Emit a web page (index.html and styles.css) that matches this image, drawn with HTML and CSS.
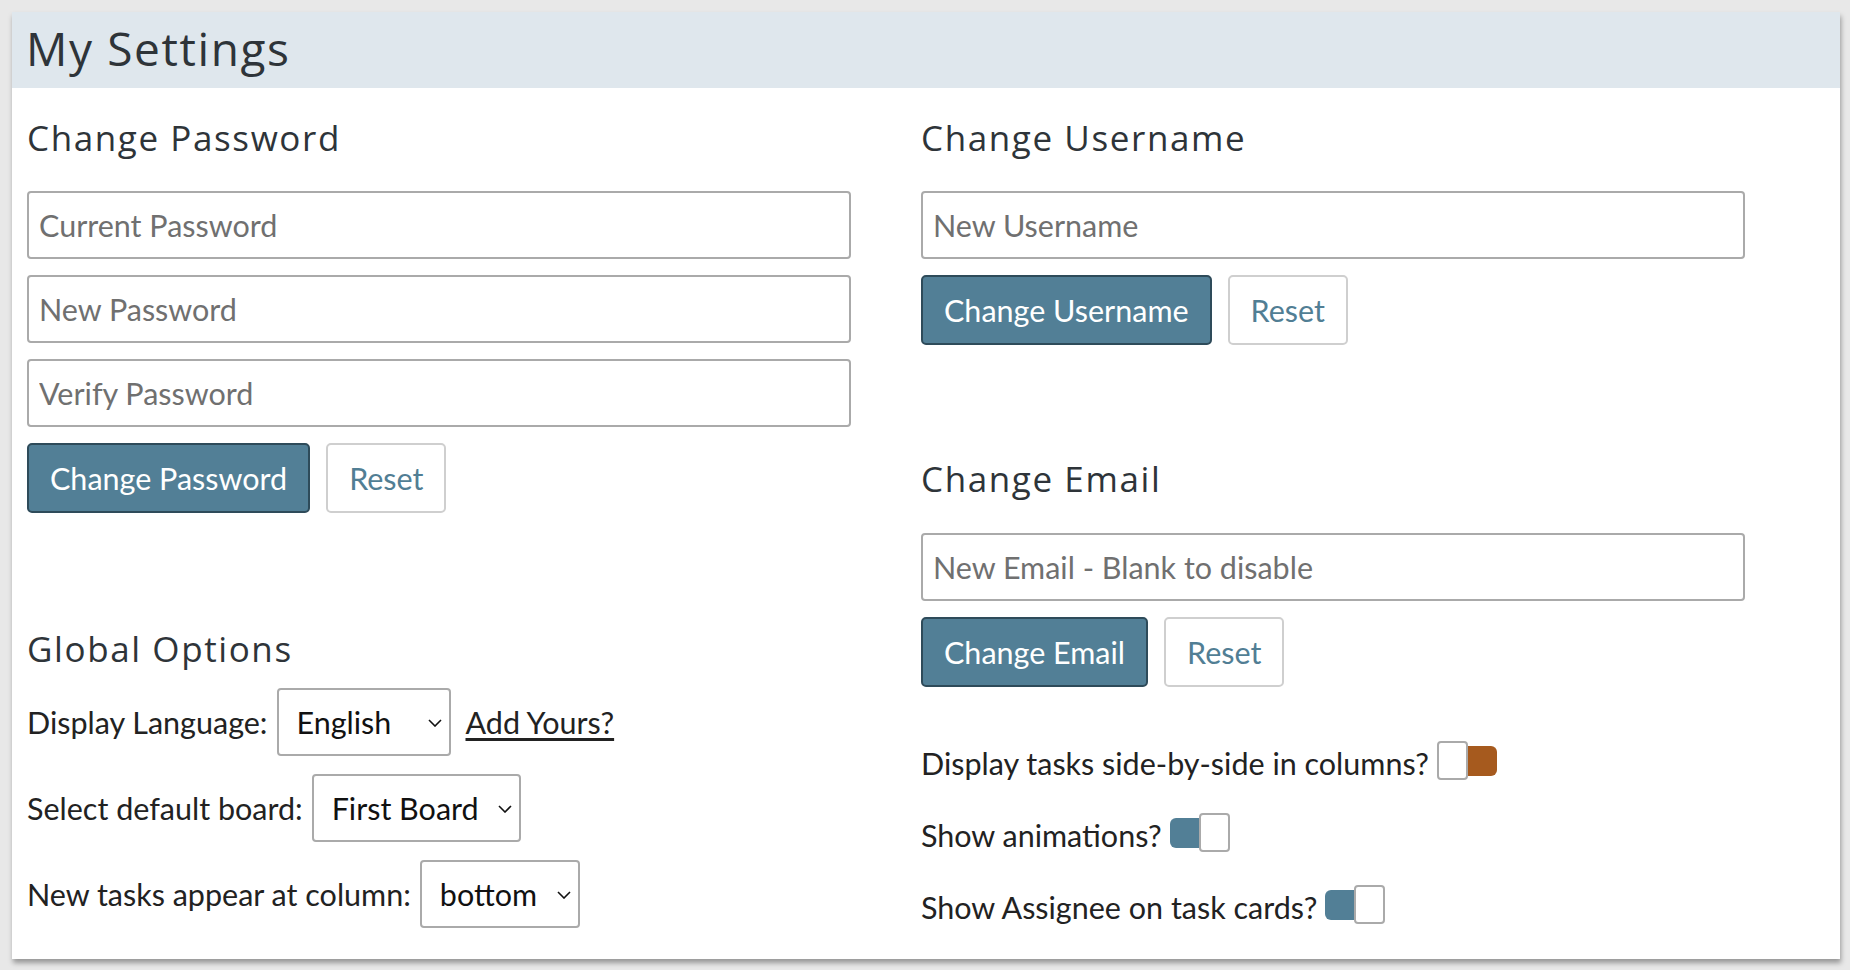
FILE: index.html
```html
<!DOCTYPE html>
<html lang="en">
<head>
<meta charset="utf-8">
<title>My Settings</title>
<link rel="stylesheet" href="styles.css">
</head>
<body>
<div class="card">
  <div class="card-header">My Settings</div>
  <div class="card-body">
    <div class="col">
      <section class="group">
        <h2 class="heading">Change Password</h2>
        <input class="field" type="password" placeholder="Current Password">
        <input class="field" type="password" placeholder="New Password">
        <input class="field" type="password" placeholder="Verify Password">
        <div class="btn-row">
          <button class="btn btn-primary">Change Password</button>
          <button class="btn btn-reset">Reset</button>
        </div>
      </section>
      <section class="group group-options">
        <h2 class="heading">Global Options</h2>
        <div class="opt-row">
          <label class="opt-label">Display Language:</label>
          <span class="sel-wrap">
            <select class="sel sel-lang"><option>English</option></select>
            <svg class="chev" viewBox="0 0 14 8" width="14" height="8"><path d="M1 1l6 6 6-6" fill="none" stroke="#111" stroke-width="1.6"/></svg>
          </span>
          <a class="add-link" href="#">Add Yours?</a>
        </div>
        <div class="opt-row">
          <label class="opt-label">Select default board:</label>
          <span class="sel-wrap">
            <select class="sel"><option>First Board</option></select>
            <svg class="chev" viewBox="0 0 14 8" width="14" height="8"><path d="M1 1l6 6 6-6" fill="none" stroke="#111" stroke-width="1.6"/></svg>
          </span>
        </div>
        <div class="opt-row">
          <label class="opt-label">New tasks appear at column:</label>
          <span class="sel-wrap">
            <select class="sel"><option>bottom</option></select>
            <svg class="chev" viewBox="0 0 14 8" width="14" height="8"><path d="M1 1l6 6 6-6" fill="none" stroke="#111" stroke-width="1.6"/></svg>
          </span>
        </div>
      </section>
    </div>
    <div class="col">
      <section class="group">
        <h2 class="heading">Change Username</h2>
        <input class="field" type="text" placeholder="New Username">
        <div class="btn-row">
          <button class="btn btn-primary">Change Username</button>
          <button class="btn btn-reset">Reset</button>
        </div>
      </section>
      <section class="group group-email">
        <h2 class="heading">Change Email</h2>
        <input class="field" type="text" placeholder="New Email - Blank to disable">
        <div class="btn-row">
          <button class="btn btn-primary">Change Email</button>
          <button class="btn btn-reset">Reset</button>
        </div>
      </section>
      <section class="toggles">
        <div class="toggle-row">
          <span class="toggle-label">Display tasks side-by-side in columns?</span>
          <span class="toggle toggle-off"><span class="knob"></span><span class="track"></span></span>
        </div>
        <div class="toggle-row">
          <span class="toggle-label">Show animations?</span>
          <span class="toggle toggle-on"><span class="track"></span><span class="knob"></span></span>
        </div>
        <div class="toggle-row">
          <span class="toggle-label">Show Assignee on task cards?</span>
          <span class="toggle toggle-on"><span class="track"></span><span class="knob"></span></span>
        </div>
      </section>
    </div>
  </div>
</div>
</body>
</html>
```
FILE: styles.css
```css
* { box-sizing: border-box; }

html, body {
  margin: 0;
  padding: 0;
}

body {
  background: #e8e8e8;
  font-family: "Lato", "Liberation Sans", sans-serif;
  color: #222;
  width: 1850px;
  height: 970px;
  overflow: hidden;
}

.card {
  margin: 12px 0 0 12px;
  width: 1828px;
  background: #fff;
  box-shadow: 1px 4px 5px rgba(0, 0, 0, 0.35);
}

.card-header {
  height: 76px;
  background: #dfe7ed;
  padding: 0 0 4px 14px;
  font-family: "Open Sans", "Lato", sans-serif;
  font-size: 46px;
  letter-spacing: 1.6px;
  line-height: 72px;
  color: #2e3439;
}

.card-body {
  display: grid;
  grid-template-columns: 894px 1fr;
  padding: 0 15px 31px;
}

.col {
  display: flex;
  flex-direction: column;
}

.heading {
  margin: 29px 0 32px;
  font-family: "Open Sans", "Lato", sans-serif;
  font-size: 35px;
  letter-spacing: 1.6px;
  font-weight: 400;
  line-height: 1.2;
  color: #2e3439;
}

.field {
  display: block;
  width: 824px;
  height: 68px;
  margin: 0 0 16px;
  padding: 0 10px;
  border: 2px solid #aaa;
  border-radius: 4px;
  font-family: inherit;
  font-size: 30.5px;
  color: #222;
  background: #fff;
}

.field::placeholder {
  color: #707070;
}

.btn-row {
  display: flex;
  gap: 16px;
}

.btn {
  height: 70px;
  padding: 0 21px;
  border-radius: 5px;
  font-family: inherit;
  font-size: 30.5px;
  cursor: pointer;
}

.btn-primary {
  background: #527f96;
  border: 2px solid #2e4b5a;
  color: #fff;
}

.btn-reset {
  background: #fff;
  border: 2px solid #cfcfcf;
  color: #517e94;
}

.group-options .heading {
  margin-top: 115px;
  margin-bottom: 18px;
}

.opt-row {
  display: flex;
  align-items: center;
  margin-bottom: 18px;
  font-size: 30.5px;
}

.opt-row:last-child {
  margin-bottom: 0;
}

.opt-label {
  margin-right: 9px;
  color: #222;
}

.sel-wrap {
  position: relative;
  display: inline-flex;
  height: 68px;
}

.sel {
  appearance: none;
  -webkit-appearance: none;
  height: 68px;
  padding: 0 40px 0 18px;
  border: 2px solid #aaa;
  border-radius: 4px;
  background: #fff;
  font-family: inherit;
  font-size: 30.5px;
  color: #111;
}

.sel-lang {
  width: 174px;
}

.chev {
  position: absolute;
  right: 9px;
  top: 31px;
  pointer-events: none;
}

.add-link {
  margin-left: 15px;
  color: #222;
  text-decoration: underline;
  text-underline-offset: 4px;
}

.group-email .heading {
  margin-top: 113px;
  margin-bottom: 33px;
}

.toggles {
  display: flex;
  flex-direction: column;
  gap: 33px;
  margin-top: 54px;
}

.toggle-row {
  display: flex;
  align-items: center;
  height: 39px;
  font-size: 30.5px;
}

.toggle-label {
  color: #222;
  margin-right: 8px;
  position: relative;
  top: 2px;
}

.toggle {
  display: inline-flex;
  align-items: center;
}

.knob {
  width: 31px;
  height: 39px;
  border: 2px solid #aaa;
  border-radius: 4px;
  background: #fff;
}

.track {
  width: 29px;
  height: 30px;
}

.toggle-off .track {
  background: #a65a1e;
  border-radius: 0 6px 6px 0;
}

.toggle-on .track {
  background: #527f96;
  border-radius: 6px 0 0 6px;
}
```
